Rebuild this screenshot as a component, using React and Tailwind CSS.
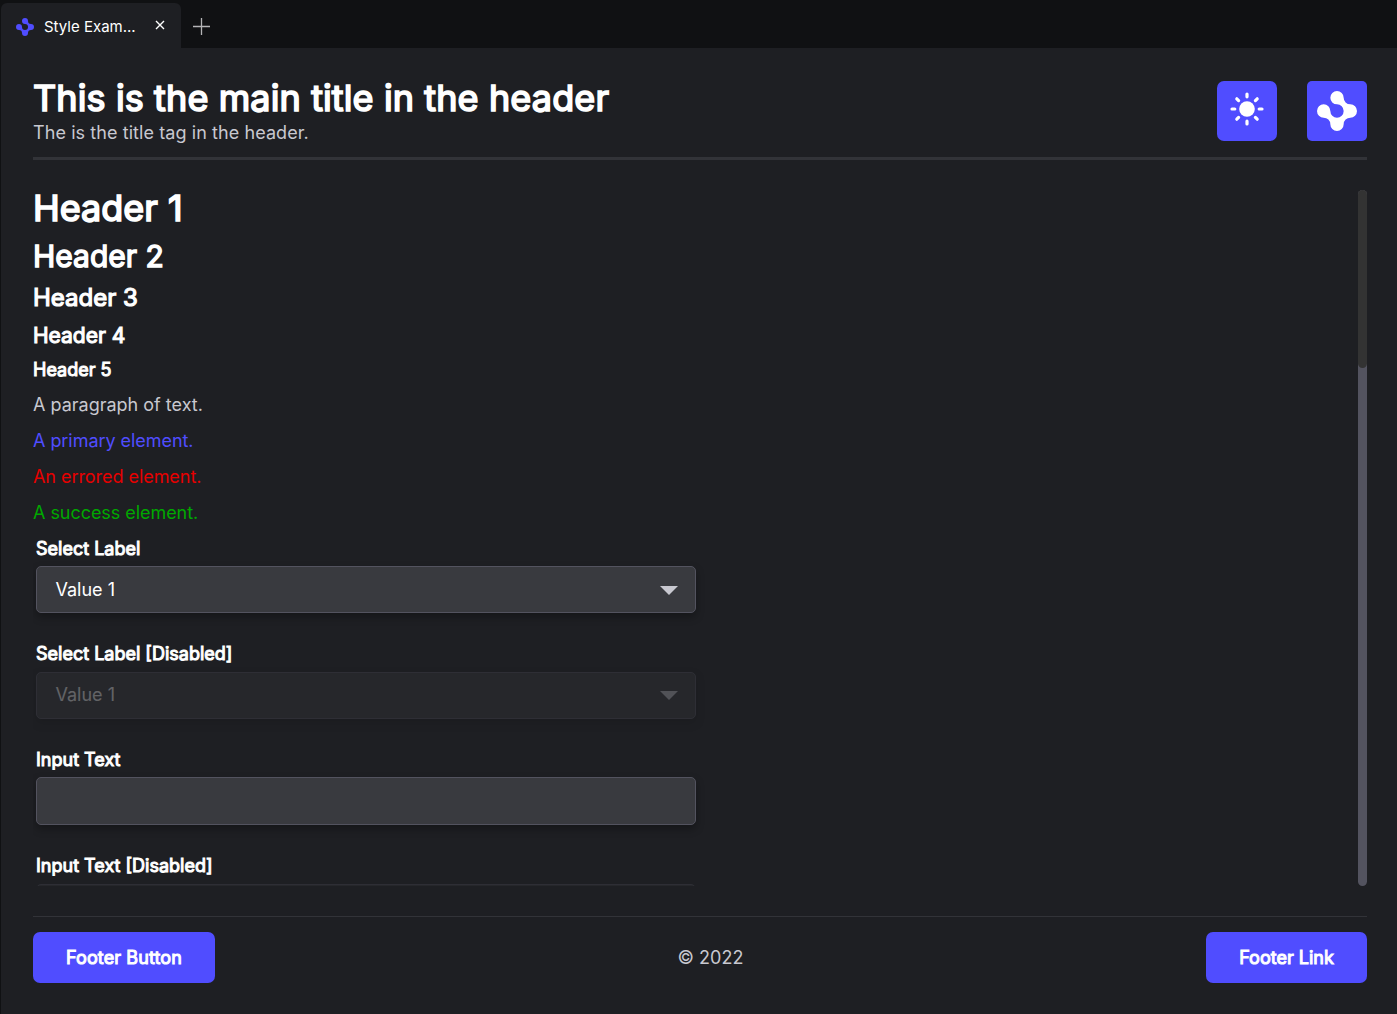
const Logo = ({ className }) => (
  <svg viewBox="0 0 6 6" className={className} fill="currentColor">
    <path d="M4 1A1 1 0 1 0 3 2A1 1 0 1 1 2 3A1 1 0 1 0 1 4A1 1 0 0 1 2 5A1 1 0 0 0 4 5A1 1 0 0 1 5 4A1 1 0 0 0 5 2A1 1 0 0 1 4 1Z" />
  </svg>
);

const Sun = () => (
  <svg viewBox="-17 -17 34 34" className="size-[34px]" fill="none" stroke="currentColor" strokeWidth="3.2" strokeLinecap="round">
    <circle r="7.8" fill="currentColor" stroke="none" />
    <path d="M0-15V-12.2M0 12.2V15M-15 0H-12.2M12.2 0H15M-10.2-10.2L-8.4-8.4M8.4 8.4L10.2 10.2M-10.2 10.2L-8.4 8.4M8.4-8.4L10.2-10.2" />
  </svg>
);

const Label = ({ children, className = "" }) => (
  <div className={`h-[26px] text-[18px] leading-[26px] text-white [-webkit-text-stroke:1px_white] ${className}`}>
    {children}
  </div>
);

const Select = ({ disabled }) => (
  <div
    className={`flex h-[47px] w-[660px] items-center justify-between rounded-[5px] border border-[#53535f] bg-[#393a3f] pr-[17px] pl-[18.5px] text-[18px] text-white shadow-[0_4px_8px_rgba(0,0,0,0.3)] ${disabled ? "pb-[2px] opacity-30" : ""}`}
  >
    <span>Value 1</span>
    <svg viewBox="0 0 18 9" className="mt-px h-[9px] w-[18px]" fill="#c8c8d0">
      <path d="M0 0H18L9 9Z" />
    </svg>
  </div>
);

export default function App() {
  return (
    <div className="flex h-[1014px] w-[1397px] flex-col overflow-hidden border-l border-[#101113] bg-[#1e1f23] font-['Inter',sans-serif] text-[18px] text-[#c8c8d0]">
      <div className="flex h-12 shrink-0 items-end bg-[#101113]">
        <div className="flex h-[45px] w-[180px] items-center rounded-t-[6px] bg-[#1e1f23] pl-[15px] text-white">
          <Logo className="mt-[2px] size-[18px] text-[#504dff]" />
          <span className="mt-[3px] ml-[10px] w-[92px] text-[15px] whitespace-nowrap">Style Exam...</span>
          <svg viewBox="0 0 10 10" className="mb-[2px] ml-[19px] size-[10px]" stroke="currentColor" strokeWidth="1.4">
            <path d="M1 1L9 9M9 1L1 9" />
          </svg>
        </div>
        <svg viewBox="0 0 17 17" className="mb-[13px] ml-[12px] size-[17px]" stroke="#b4b4b6" strokeWidth="1.3">
          <path d="M8.5 0V17M0 8.5H17" />
        </svg>
      </div>

      <div className="flex grow flex-col pr-[30px] pl-8">
        <header className="flex h-[112px] justify-between border-b-[3px] border-[#323338] pt-[33px]">
          <div>
            <h1 className="-mt-[4px] h-[42px] text-[36px] leading-[42px] text-white [-webkit-text-stroke:1.7px_white] tracking-[0.11px]">
              This is the main title in the header
            </h1>
            <p className="h-[27px] leading-[28px] tracking-[0.08px]">The is the title tag in the header.</p>
          </div>
          <div className="flex gap-[30px] text-white">
            <button className="flex size-[60px] items-center justify-center rounded-[7px] bg-[#504dff] pb-[4px]">
              <Sun />
            </button>
            <button className="flex size-[60px] items-center justify-center rounded-[5px] bg-[#504dff]">
              <Logo className="size-10" />
            </button>
          </div>
        </header>

        <main className="mt-[22px] flex h-[704px] justify-between overflow-hidden pt-2">
          <div>
            <h1 className="-mt-1 h-[46px] text-[36px] leading-[45px] text-white [-webkit-text-stroke:1.7px_white]">Header 1</h1>
            <h2 className="h-[46px] text-[30px] leading-[48px] text-white [-webkit-text-stroke:1.4px_white]">Header 2</h2>
            <h3 className="h-[40px] text-[24px] leading-[40px] text-white [-webkit-text-stroke:1.2px_white]">Header 3</h3>
            <h4 className="h-[36px] text-[21px] leading-[35px] text-white [-webkit-text-stroke:1.1px_white]">Header 4</h4>
            <h5 className="h-[33px] text-[18px] leading-[32px] text-white [-webkit-text-stroke:1px_white]">Header 5</h5>
            <p className="h-9 leading-9">A paragraph of text.</p>
            <p className="h-9 leading-9 tracking-[-0.05px] text-[#504dff]">A primary element.</p>
            <p className="h-9 leading-9 tracking-[-0.05px] text-[#e60000]">An errored element.</p>
            <p className="h-9 leading-9 tracking-[-0.05px] text-[#00a800]">A success element.</p>
            <div className="pl-[3px]">
              <Label className="mt-[5px] mb-[4px]">Select Label</Label>
              <Select />
              <Label className="mt-[28px] mb-[5px]">Select Label [Disabled]</Label>
              <Select disabled />
              <Label className="mt-[28px] mb-[4px]">Input Text</Label>
              <div className="h-12 w-[660px] rounded-[5px] border border-[#53535f] bg-[#393a3f] shadow-[0_4px_8px_rgba(0,0,0,0.3)]" />
              <Label className="mt-[28px] mb-[5px]">Input Text [Disabled]</Label>
              <div className="h-12 w-[660px] rounded-[5px] border border-[#53535f] bg-[#393a3f] opacity-30" />
            </div>
          </div>
          <div className="h-[696px] w-[9px] overflow-hidden rounded-full bg-[#53535f]">
            <div className="h-[178px] rounded-b-full bg-[#333333]" />
          </div>
        </main>

        <footer className="mt-[30px] flex items-center justify-between border-t border-[#323338] pt-[15px]">
          <button className="h-[51px] w-[182px] rounded-[7px] bg-[#504dff] text-white [-webkit-text-stroke:1px_white] tracking-[0.1px]">
            Footer Button
          </button>
          <span>© 2022</span>
          <button className="h-[51px] w-[161px] rounded-[7px] bg-[#504dff] text-white [-webkit-text-stroke:1px_white]">
            Footer Link
          </button>
        </footer>
      </div>
    </div>
  );
}
